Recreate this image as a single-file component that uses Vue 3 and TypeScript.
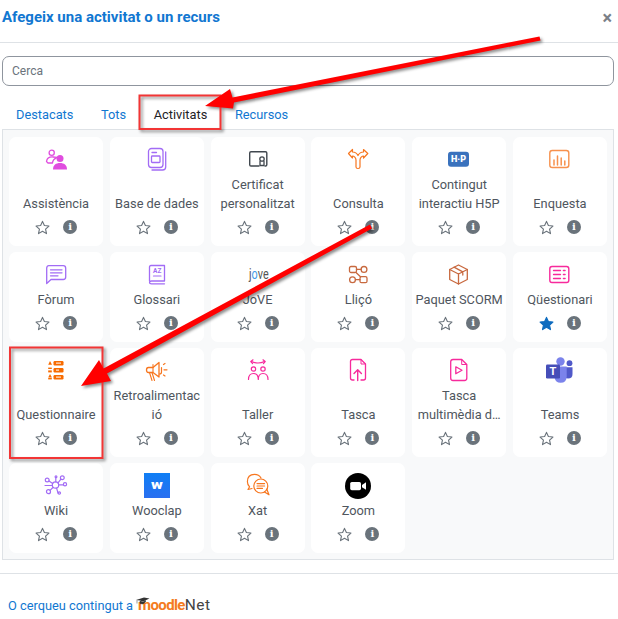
<script setup lang="ts">
interface Activity {
  name: string
  icon: string
  starred?: boolean
}

const tabs = ['Destacats', 'Tots', 'Activitats', 'Recursos']
const activeTab = 'Activitats'

const pink = '#f72a9c'
const purple = '#a26cf5'
const orange = '#f7761f'
const brown = '#c8693f'

const line = (color: string, w = 1.3) =>
  `fill="none" stroke="${color}" stroke-width="${w}" stroke-linecap="round" stroke-linejoin="round"`

const activities: Activity[] = [
  {
    name: 'Assistència',
    icon: `<circle cx="8.7" cy="5.7" r="2.6" ${line('#e04ddf')}/>
      <path d="M3.5 14.5 C4 11 7 9.8 10 10 L14 10.4 C11 12 9.5 14 9.5 16 H5 Z" ${line('#e04ddf')}/>
      <circle cx="17" cy="11.4" r="3.5" fill="#e04ddf"/>
      <path d="M10 22.5 C10 18 13 16 17 16 C21 16 24 18 24 22.5 Z" fill="#e04ddf"/>`
  },
  {
    name: 'Base de dades',
    icon: `<rect x="4.5" y="1.5" width="14.5" height="19" rx="3" ${line(purple)}/>
      <path d="M21.7 5 V20 Q21.7 23 18.5 23 H8" ${line(purple)}/>
      <path d="M8 5.5 H12.5" ${line(purple)}/>
      <rect x="7.5" y="9" width="8.5" height="6.5" rx="0.8" ${line(purple)}/>`
  },
  {
    name: 'Certificat personalitzat',
    icon: `<path d="M14 19 H6 Q4.7 19 4.7 17.7 V6 Q4.7 4.7 6 4.7 H20.5 Q21.8 4.7 21.8 6 V17.7 Q21.8 19 20.5 19 H20" ${line('#40474e', 1.4)}/>
      <circle cx="17" cy="12" r="2.2" ${line('#40474e', 1.3)}/>
      <path d="M15 14.5 V18.5 H19 V14.5" ${line('#40474e', 1.3)}/>`
  },
  {
    name: 'Consulta',
    icon: `<path d="M11 20 V13 C11 10.5 9 9 7.5 9 V11 L3.5 6.5 L7.5 2.5 V5 C10 5 12 6.5 13 8.5 C14 6.5 16 5 18.5 5 V2.5 L22.8 6.5 L18.5 11 V9 C17 9 15 10.5 15 13 V20 C15 22 11 22 11 20 Z" ${line(orange, 1.2)}/>`
  },
  {
    name: 'Contingut interactiu H5P',
    icon: `<rect x="2" y="4.7" width="21" height="15" rx="3" fill="#3a72bd"/>
      <text x="12.5" y="15.4" text-anchor="middle" font-family="Roboto, sans-serif" font-weight="900" font-size="9" fill="#fff">H·P</text>`
  },
  {
    name: 'Enquesta',
    icon: `<rect x="2.8" y="3.5" width="19" height="17" rx="2.5" ${line('#f7914d', 1.4)}/>
      <path d="M7 18 V13 M10.5 18 V9 M14.2 18 V11 M17.8 18 V14" ${line('#f7914d', 1.5)}/>`
  },
  {
    name: 'Fòrum',
    icon: `<path d="M5.8 3.7 H20.2 Q22.7 3.7 22.7 6.2 V15 Q22.7 17.5 20.2 17.5 H8 L3.7 21.5 V6.2 Q3.7 3.7 5.8 3.7 Z" ${line(purple, 1.3)}/>
      <path d="M7.5 7.8 H19 M7.5 10.8 H19 M7.5 13.8 H15" ${line(purple, 1.3)}/>`
  },
  {
    name: 'Glossari',
    icon: `<path d="M5.5 19 V5 Q5.5 3.5 7 3.5 H20.5 V19 H7.5 Q5.5 19 5.5 20.5 Q5.5 21.8 7.5 21.8 H20.5" ${line(purple, 1.3)}/>
      <text x="13.2" y="10.8" text-anchor="middle" font-family="Roboto, sans-serif" font-weight="700" font-size="6.5" fill="${purple}">AZ</text>
      <path d="M9.5 14 H17" ${line(purple, 1.2)}/>`
  },
  {
    name: 'JoVE',
    icon: `<g transform="translate(4 17) scale(0.72 1)"><text font-family="Roboto, sans-serif" font-size="15" fill="#555">j<tspan fill="#3f9be8">o</tspan>ve</text></g>`
  },
  {
    name: 'Lliçó',
    icon: `<rect x="4.5" y="4.5" width="7" height="6" rx="1.5" ${line(brown)}/>
      <circle cx="19" cy="7.4" r="2.9" ${line(brown)}/>
      <circle cx="7.5" cy="17.7" r="2.9" ${line(brown)}/>
      <rect x="15" y="14.7" width="7" height="6" rx="1.5" ${line(brown)}/>
      <path d="M11.5 7.4 H16 M10.5 17.7 H15 M11 10.5 L15.5 14.7" ${line(brown)}/>`
  },
  {
    name: 'Paquet SCORM',
    icon: `<path d="M12.5 3 L21.3 7.5 V17.5 L12.5 22 L3.7 17.5 V7.5 Z" ${line(brown)}/>
      <path d="M3.7 7.5 L12.5 12 L21.3 7.5 M12.5 12 V22 M8 5.2 L16.8 9.8 V13" ${line(brown)}/>`
  },
  {
    name: 'Qüestionari',
    starred: true,
    icon: `<rect x="2.8" y="4.5" width="19" height="16" rx="2.2" ${line(pink, 1.4)}/>
      <path d="M6.5 8.5 H13.5 M6.5 12.5 H13.5 M6.5 16.5 H13.5" ${line(pink, 1.3)}/>
      <path d="M16.5 8.5 H18 M16.5 12.5 H18 M16.5 16.5 H18" ${line(pink, 1.6)}/>`
  },
  {
    name: 'Questionnaire',
    icon: `<g fill="#f76b00">
      <rect x="10.5" y="3" width="10" height="4.4" rx="1.2"/>
      <rect x="10.5" y="10" width="10" height="4.4" rx="1.2"/>
      <rect x="10.5" y="17" width="10" height="4.4" rx="1.2"/>
      <path d="M7 3 L9 6.8 H5.2 Z"/>
      <rect x="5.2" y="9.6" width="3.6" height="1.4"/><rect x="5.2" y="12.4" width="3.6" height="2"/>
      <path d="M7 16 L9 19.5 H5.2 Z"/><rect x="5.2" y="20" width="3.6" height="1.4"/>
    </g>
    <g fill="#fff"><rect x="13" y="4.6" width="5" height="1"/><rect x="13" y="11.6" width="3" height="1"/><rect x="13" y="18.6" width="5" height="1"/></g>`
  },
  {
    name: 'Retroalimentació',
    icon: `<path d="M4.5 9.5 H9 L15 4.5 V19 L9 14.5 H4.5 Q2.5 14.5 2.5 12 Q2.5 9.5 4.5 9.5 Z" ${line(orange, 1.3)}/>
      <path d="M5.5 14.5 L8 22.5 M8 14.5 L10.5 22.5 M9 6.5 V14" ${line(orange, 1.1)}/>
      <path d="M17.5 9.5 V14 Q17.5 16 15.5 16" ${line(orange, 1.2)}/>
      <path d="M19.5 6.5 L21 5.5 M20 11.8 H23 M19.5 17 L21 18" ${line(orange, 1.2)}/>`
  },
  {
    name: 'Taller',
    icon: `<path d="M6.5 3.5 Q13 6.5 19.5 3.5" ${line(pink, 1.2)}/>
      <path d="M8 1.8 L5.8 3.5 L7.6 5.6 M18 1.8 L20.2 3.5 L18.4 5.6" ${line(pink, 1.2)}/>
      <circle cx="8.5" cy="11" r="2.2" ${line(pink, 1.2)}/>
      <circle cx="18" cy="11" r="2.2" ${line(pink, 1.2)}/>
      <path d="M3.5 21.5 Q3.5 15.5 8.5 15.5 Q13.3 15.5 13.3 21.5 Q13.3 15.5 18 15.5 Q23 15.5 23 21.5" ${line(pink, 1.2)}/>`
  },
  {
    name: 'Tasca',
    icon: `<path d="M9 22 H7.5 Q5.5 22 5.5 20 V3.5 Q5.5 1.5 7.5 1.5 H16 L20.5 6 V20 Q20.5 22 18.5 22 H16" ${line(pink, 1.3)}/>
      <path d="M16 1.8 V6 H20.3" ${line(pink, 1)}/>
      <path d="M12.7 22.5 V12 M9 15.5 L12.7 11.8 L16.4 15.5" ${line(pink, 1.4)}/>`
  },
  {
    name: 'Tasca multimèdia d…',
    icon: `<path d="M7 22.5 Q4.7 22.5 4.7 20 V3.8 Q4.7 1.5 7 1.5 H15.7 L20.8 6.5 V20 Q20.8 22.5 18.5 22.5 Z" ${line(pink, 1.3)}/>
      <path d="M15.7 1.8 V6.5 H20.5" ${line(pink, 1)}/>
      <path d="M9.8 8.8 L16 12.3 L9.8 15.8 Z" ${line(pink, 1.3)}/>`
  },
  {
    name: 'Teams',
    icon: `<circle cx="13.5" cy="3.5" r="4.2" fill="#7b83eb"/>
      <circle cx="22.5" cy="5.2" r="2.9" fill="#5059c9"/>
      <path d="M18 9.3 H25.5 V16 Q25.5 20.5 21 20.5 Q18 20.5 17 18.5 Z" fill="#5059c9"/>
      <path d="M7.5 8.5 H19.7 V18.5 Q19.7 24.8 13.5 24.8 Q8.5 24.8 7.5 19.5 Z" fill="#7b83eb"/>
      <rect x="-1" y="6.5" width="14" height="14" rx="1.2" fill="#464eb8"/>
      <text x="6" y="17.4" text-anchor="middle" font-family="Roboto, sans-serif" font-weight="700" font-size="11" fill="#fff">T</text>`
  },
  {
    name: 'Wiki',
    icon: `<g ${line(purple, 1.2)}>
      <circle cx="12.5" cy="12" r="3.2"/>
      <circle cx="4.2" cy="7" r="1.9"/><circle cx="19.3" cy="4.8" r="1.9"/>
      <circle cx="22" cy="11.3" r="1.6"/><circle cx="5.5" cy="18.7" r="2"/>
      <circle cx="13" cy="3.8" r="0.9"/><circle cx="16.3" cy="20" r="1.2"/>
      <path d="M6 8 L9.7 10.4 M17.9 6.2 L15 9.8 M15.7 11.8 H20.4 M7 17.4 L10.2 14.3 M12.8 4.8 V8.8 M15 20.2 L13.6 15.1 M2 12.5 H9.3"/>
    </g>`
  },
  {
    name: 'Wooclap',
    icon: `<defs><linearGradient id="wc" x1="0" y1="0" x2="0" y2="1"><stop offset="0" stop-color="#0f7ff5"/><stop offset="1" stop-color="#2a6ff0"/></linearGradient></defs>
      <rect x="0" y="0" width="26" height="25" fill="url(#wc)"/>
      <g transform="translate(13 15.5) scale(1.25 1)"><text text-anchor="middle" font-family="Roboto, sans-serif" font-weight="900" font-size="13" fill="#fff">w</text></g>`
  },
  {
    name: 'Xat',
    icon: `<path d="M7 15.5 L3 16.5 L4.6 13.8 Q2.4 11.5 2.4 8.7 Q2.4 1.4 9.5 1.4 Q14 1.4 16 5" ${line(orange, 1.2)}/>
      <circle cx="15.8" cy="13" r="7" ${line(orange, 1.2)}/>
      <path d="M19.5 19 L24 21.8 L21.8 16.2" ${line(orange, 1.2)}/>
      <path d="M12 10.6 H19.6 M12 13 H19.6 M12 15.4 H17.5" ${line(orange, 1.1)}/>`
  },
  {
    name: 'Zoom',
    icon: `<circle cx="13" cy="13" r="13" fill="#000"/>
      <rect x="5.2" y="9" width="10.8" height="8.2" rx="1.6" fill="#fff"/>
      <path d="M17 12 L21 9.3 V16.8 L17 14.2 Z" fill="#fff"/>`
  }
]
</script>

<template>
  <div class="page">
    <header class="modal-header">
      <h5 class="modal-title">Afegeix una activitat o un recurs</h5>
      <span class="close">×</span>
    </header>

    <div class="modal-body">
      <input class="search" type="text" placeholder="Cerca" />

      <nav class="tabs">
        <a v-for="tab in tabs" :key="tab" class="tab" :class="{ active: tab === activeTab }">{{ tab }}</a>
      </nav>

      <div class="panel">
        <div v-for="item in activities" :key="item.name" class="card">
          <svg class="icon" viewBox="0 0 26 26" width="26" height="26" v-html="item.icon"></svg>
          <div class="name"><span class="name-text">{{ item.name }}</span></div>
          <div class="card-footer">
            <svg class="star" :class="{ starred: item.starred }" viewBox="0 0 24 24" width="15" height="15">
              <path d="M12 2.2 L15 8.9 L22.3 9.7 L16.9 14.6 L18.4 21.8 L12 18.1 L5.6 21.8 L7.1 14.6 L1.7 9.7 L9 8.9 Z" />
            </svg>
            <span class="info">i</span>
          </div>
        </div>
      </div>
    </div>

    <footer class="modal-footer">
      <a class="link">O cerqueu contingut a</a>
      <span class="logo">
        <svg class="hat" viewBox="0 0 14 8" width="14" height="8">
          <path d="M0 3 L8 0.4 L13.5 1.6 L7 4.6 L4 3.4 Z" fill="#333" />
          <path d="M4 4 V6.5 L7 7 L9.5 5 V3.6 L7 5 Z M1 3.2 V6.5" fill="#333" stroke="#333" stroke-width="0.5" />
        </svg>
        <span class="logo-moodle">moodle</span><span class="logo-net">Net</span>
      </span>
    </footer>

    <svg class="annotations" viewBox="0 0 618 619" width="618" height="619">
      <rect x="139.5" y="95.5" width="81" height="33.5" />
      <rect x="10" y="347.5" width="92.5" height="110.5" />
      <polygon points="205,106 230,89 232.5,97.5 539.5,36.5 540.5,40.5 234,102.5 233,108.5" class="arrow" />
      <polygon points="81,386 99,360 103.5,368.5 370,224.5 372,228.5 107,373.5 111,381" class="arrow" />
    </svg>
  </div>
</template>

<style>
html,
body {
  background: #fff;
}
</style>

<style scoped>
.page {
  position: relative;
  width: 618px;
  height: 619px;
  overflow: hidden;
  font-family: Roboto, "Liberation Sans", sans-serif;
  font-size: 12.8px;
  line-height: 19px;
  color: #4f565e;
}

.modal-header {
  display: flex;
  align-items: center;
  justify-content: space-between;
  height: 42px;
  padding: 0 6px 0 2px;
  border-bottom: 1px solid #dee2e6;
}

.modal-title {
  margin: 0 0 8px;
  font-size: 15px;
  font-weight: 700;
  color: #1177d1;
}

.close {
  margin-bottom: 7px;
  font-size: 18px;
  font-weight: 700;
  color: #7a8087;
}

.modal-body {
  padding: 13px 4px 0 2px;
}

.search {
  display: block;
  box-sizing: border-box;
  width: 100%;
  height: 29.5px;
  padding: 0 9px;
  border: 1px solid #8f959e;
  border-radius: 7px;
  font-family: inherit;
  font-size: 12px;
  color: #4f565e;
  outline: none;
}

.search::placeholder {
  color: #6a737b;
}

.tabs {
  display: flex;
  margin-top: 13.5px;
}

.tab {
  padding: 6px 13.6px 5px 14px;
  color: #1177d1;
}

.tab.active {
  color: #1d2125;
}

.panel {
  display: grid;
  grid-template-columns: repeat(6, 1fr);
  column-gap: 6.7px;
  row-gap: 6px;
  align-content: start;
  padding: 7px 6px 6px;
  border: 1px solid #dee2e6;
  background: #f8f9fa;
}

.card {
  display: flex;
  flex-direction: column;
  align-items: center;
  min-width: 0;
  padding: 10px 2.5px 8px;
  border-radius: 7px;
  background: #fff;
}

.icon {
  flex: none;
  overflow: visible;
}

.name {
  display: flex;
  flex: 1;
  align-items: flex-end;
  width: 100%;
  margin-top: 2px;
  text-align: center;
}

.name-text {
  display: -webkit-box;
  width: 100%;
  overflow: hidden;
  overflow-wrap: break-word;
  -webkit-box-orient: vertical;
  -webkit-line-clamp: 2;
}

.card-footer {
  display: flex;
  align-items: center;
  justify-content: center;
  gap: 13px;
  height: 22px;
  margin-top: 3px;
}

.star {
  fill: none;
  stroke: #6a737b;
  stroke-width: 1.8;
  stroke-linejoin: round;
}

.star.starred {
  fill: #0f6cbf;
  stroke: #0f6cbf;
}

.info {
  display: block;
  width: 14px;
  height: 14px;
  border-radius: 50%;
  background: #6a737b;
  color: #fff;
  font-family: "DejaVu Serif", serif;
  font-size: 10px;
  font-weight: 700;
  line-height: 14px;
  text-align: center;
}

.modal-footer {
  display: flex;
  box-sizing: border-box;
  align-items: center;
  height: 46px;
  margin-top: 13px;
  padding: 17px 0 0 8px;
  border-top: 1px solid #dee2e6;
}

.link {
  color: #1177d1;
}

.logo {
  position: relative;
  display: flex;
  align-items: baseline;
  margin-left: 5px;
}

.hat {
  position: absolute;
  top: 1px;
  left: -2px;
}

.logo-moodle {
  font-size: 15px;
  font-weight: 700;
  letter-spacing: -0.6px;
  color: #f47b20;
}

.logo-net {
  font-size: 15.5px;
  letter-spacing: 0.4px;
  color: #444;
}

.annotations {
  position: absolute;
  top: 0;
  left: 0;
  pointer-events: none;
  filter: drop-shadow(2px 2px 1.5px rgba(0, 0, 0, 0.45));
}

.annotations rect {
  fill: none;
  stroke: #f23535;
  stroke-width: 2;
}

.arrow {
  fill: #f00;
}
</style>
